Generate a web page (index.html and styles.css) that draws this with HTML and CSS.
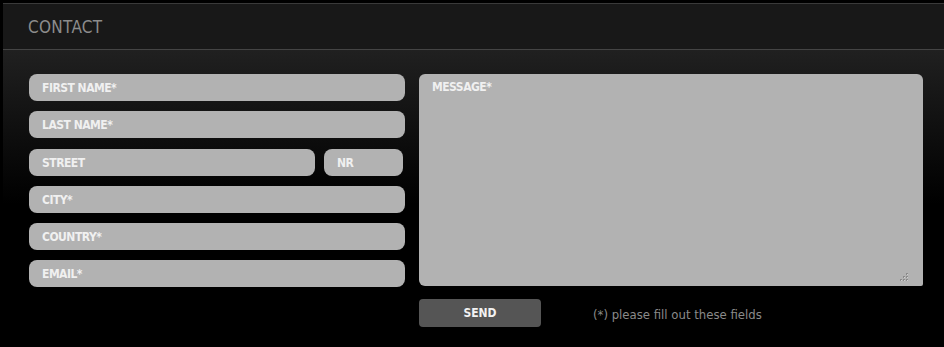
FILE: index.html
```html
<!DOCTYPE html>
<html lang="en">
<head>
    <meta charset="UTF-8">
    <title>Contact</title>
    <link rel="stylesheet" href="styles.css">
</head>
<body>
    <div class="panel">
        <div class="panel-header">
            <h2>CONTACT</h2>
        </div>

        <form class="contact-form">
            <div class="fields">
                <input type="text" name="first_name" placeholder="FIRST NAME*">
                <input type="text" name="last_name" placeholder="LAST NAME*">
                <div class="street-row">
                    <input type="text" class="street" name="street" placeholder="STREET">
                    <input type="text" class="nr" name="nr" placeholder="NR">
                </div>
                <input type="text" name="city" placeholder="CITY*">
                <input type="text" name="country" placeholder="COUNTRY*">
                <input type="text" name="email" placeholder="EMAIL*">
            </div>

            <div class="message-col">
                <div class="message-box">
                    <textarea name="message" placeholder="MESSAGE*"></textarea>
                    <!-- dotted resize grip -->
                    <svg class="grip" width="12" height="12" viewBox="0 0 12 12">
                        <g fill="#8a8a8a">
                            <rect x="8" y="0" width="2" height="2"/>
                            <rect x="5" y="3" width="2" height="2"/>
                            <rect x="8" y="3" width="2" height="2"/>
                            <rect x="2" y="6" width="2" height="2"/>
                            <rect x="5" y="6" width="2" height="2"/>
                            <rect x="8" y="6" width="2" height="2"/>
                        </g>
                        <g fill="#d0d0d0">
                            <rect x="9" y="1" width="1" height="1"/>
                            <rect x="6" y="4" width="1" height="1"/>
                            <rect x="9" y="4" width="1" height="1"/>
                            <rect x="3" y="7" width="1" height="1"/>
                            <rect x="6" y="7" width="1" height="1"/>
                            <rect x="9" y="7" width="1" height="1"/>
                        </g>
                    </svg>
                </div>
                <div class="form-footer">
                    <button type="submit">SEND</button>
                    <span class="note">(*) please fill out these fields</span>
                </div>
            </div>
        </form>
    </div>
</body>
</html>
```

FILE: styles.css
```css
body {
    margin: 0;
    background-color: #000;
    font-family: 'DejaVu Sans Condensed', 'DejaVu Sans', sans-serif;
    height: 347px;
    overflow: hidden;
}

.panel {
    margin: 3px 0 0 3px;
    border-top: 1px solid #3a3a3a;
    background: linear-gradient(to bottom, #2a2a2a 0px, #0a0a0a 150px, #000 200px);
    height: 343px;
}

.panel-header {
    height: 45px;
    background-color: #181818;
    border-bottom: 1px solid #444;
    display: flex;
    align-items: center;
    padding-left: 25px;
}

.panel-header h2 {
    margin: 0;
    font-size: 17px;
    font-weight: normal;
    color: #8c8c8c;
    letter-spacing: 0.3px;
}

.contact-form {
    display: flex;
    gap: 14px;
    padding: 24px 0 0 26px;
}

.fields {
    display: flex;
    flex-direction: column;
    gap: 10px;
    width: 376px;
}

.street-row {
    display: flex;
    gap: 9px;
    margin-top: 1px;
}

.fields input,
.contact-form textarea {
    box-sizing: border-box;
    border: none;
    background-color: #b2b2b2;
    font-family: inherit;
    font-size: 12px;
    font-weight: bold;
    letter-spacing: -0.5px;
    color: #f0f0f0;
    outline: none;
}

.fields input {
    height: 27px;
    width: 100%;
    padding: 0 13px;
    border-radius: 8px;
}

.fields .street {
    width: 286px;
}

.fields .nr {
    width: 79px;
}

.fields input::placeholder,
.contact-form textarea::placeholder {
    color: #f0f0f0;
}

.message-col {
    display: flex;
    flex-direction: column;
}

.message-box {
    position: relative;
    width: 504px;
    height: 212px;
}

.contact-form textarea {
    display: block;
    width: 504px;
    height: 212px;
    padding: 6px 13px;
    border-radius: 6px 6px 2px 6px;
    resize: none;
}

.grip {
    position: absolute;
    right: 13px;
    bottom: 1px;
}

.form-footer {
    display: flex;
    align-items: center;
    gap: 52px;
    margin-top: 13px;
}

.form-footer button {
    width: 122px;
    height: 28px;
    border: none;
    border-radius: 4px;
    background-color: #555;
    color: #f2f2f2;
    font-family: inherit;
    font-size: 12px;
    font-weight: bold;
    cursor: pointer;
}

.note {
    font-size: 13px;
    color: #8a8a8a;
    padding-top: 2px;
}
```
